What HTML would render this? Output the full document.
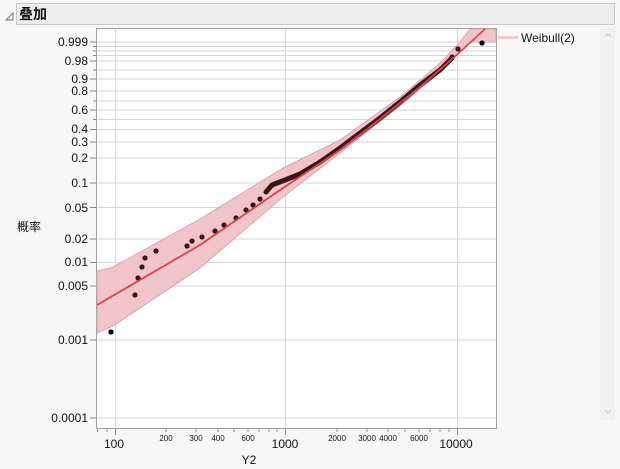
<!DOCTYPE html>
<html><head><meta charset="utf-8"><style>
html,body{margin:0;padding:0;background:#f7f7f7;width:620px;height:469px;overflow:hidden}
svg{display:block;font-family:"Liberation Sans","Noto Sans CJK SC",sans-serif}
</style></head><body>
<svg width="620" height="469" viewBox="0 0 620 469">
<rect x="0" y="0" width="620" height="469" fill="#f7f7f7"/>
<!-- header -->
<rect x="16.5" y="3.5" width="598" height="21" fill="#ececec" stroke="#c8c8c8"/>
<path d="M6 20 L13 13 L13 20 Z" fill="none" stroke="#777" stroke-width="1"/>
<text x="19" y="19" font-size="14" font-weight="bold" fill="#111" font-family="Noto Sans CJK SC,sans-serif">叠加</text>
<!-- scrollbar -->
<rect x="600" y="28" width="15" height="392" fill="#f0f0f0"/>
<path d="M605 37 L608 34 L611 37" fill="none" stroke="#ccc"/>
<path d="M605 410 L608 413 L611 410" fill="none" stroke="#ccc"/>
<!-- plot -->
<rect x="96.5" y="28.5" width="400" height="400" fill="#fff" stroke="#a0a0a0"/>
<g stroke="#d6d6d6" stroke-width="1">
<line x1="97" x2="496" y1="42" y2="42"/><line x1="97" x2="496" y1="46.5" y2="46.5"/><line x1="97" x2="496" y1="51" y2="51"/><line x1="97" x2="496" y1="55.5" y2="55.5"/><line x1="97" x2="496" y1="61" y2="61"/><line x1="97" x2="496" y1="70" y2="70"/><line x1="97" x2="496" y1="79" y2="79"/><line x1="97" x2="496" y1="91" y2="91"/><line x1="97" x2="496" y1="101" y2="101"/><line x1="97" x2="496" y1="110" y2="110"/><line x1="97" x2="496" y1="119.5" y2="119.5"/><line x1="97" x2="496" y1="129.5" y2="129.5"/><line x1="97" x2="496" y1="142" y2="142"/><line x1="97" x2="496" y1="158" y2="158"/><line x1="97" x2="496" y1="183" y2="183"/><line x1="97" x2="496" y1="207.5" y2="207.5"/><line x1="97" x2="496" y1="239" y2="239"/><line x1="97" x2="496" y1="262.5" y2="262.5"/><line x1="97" x2="496" y1="286" y2="286"/><line x1="97" x2="496" y1="340" y2="340"/><line x1="97" x2="496" y1="418" y2="418"/>
<line x1="115.5" x2="115.5" y1="29" y2="428"/><line x1="285.5" x2="285.5" y1="29" y2="428"/><line x1="457.5" x2="457.5" y1="29" y2="428"/>
</g>
<!-- y ticks -->
<g stroke="#888">
<line x1="90" x2="96" y1="42" y2="42"/><line x1="93" x2="96" y1="46.5" y2="46.5"/><line x1="93" x2="96" y1="51" y2="51"/><line x1="93" x2="96" y1="55.5" y2="55.5"/><line x1="90" x2="96" y1="61" y2="61"/><line x1="93" x2="96" y1="70" y2="70"/><line x1="90" x2="96" y1="79" y2="79"/><line x1="90" x2="96" y1="91" y2="91"/><line x1="93" x2="96" y1="101" y2="101"/><line x1="90" x2="96" y1="110" y2="110"/><line x1="93" x2="96" y1="119.5" y2="119.5"/><line x1="90" x2="96" y1="129.5" y2="129.5"/><line x1="90" x2="96" y1="142" y2="142"/><line x1="90" x2="96" y1="158" y2="158"/><line x1="90" x2="96" y1="183" y2="183"/><line x1="90" x2="96" y1="207.5" y2="207.5"/><line x1="90" x2="96" y1="239" y2="239"/><line x1="90" x2="96" y1="262.5" y2="262.5"/><line x1="90" x2="96" y1="286" y2="286"/><line x1="90" x2="96" y1="340" y2="340"/><line x1="90" x2="96" y1="418" y2="418"/>
</g>
<g font-size="12" fill="#111" text-anchor="end">
<text x="88" y="46">0.999</text><text x="88" y="65">0.98</text><text x="88" y="83">0.9</text><text x="88" y="95">0.8</text><text x="88" y="114">0.6</text><text x="88" y="133">0.4</text><text x="88" y="146">0.3</text><text x="88" y="162">0.2</text><text x="88" y="187">0.1</text><text x="88" y="212">0.05</text><text x="88" y="243">0.02</text><text x="88" y="266">0.01</text><text x="88" y="290">0.005</text><text x="88" y="344">0.001</text><text x="88" y="422">0.0001</text>
</g>
<text x="17" y="231" font-size="12" fill="#111" font-family="Noto Sans CJK SC,sans-serif">概率</text>
<!-- x ticks -->
<g stroke="#888">
<line x1="115.5" x2="115.5" y1="429" y2="435"/><line x1="285.5" x2="285.5" y1="429" y2="435"/><line x1="457.5" x2="457.5" y1="429" y2="435"/>
<line x1="97.5" x2="97.5" y1="429" y2="432"/><line x1="107" x2="107" y1="429" y2="432"/><line x1="166" x2="166" y1="429" y2="432"/><line x1="196" x2="196" y1="429" y2="432"/><line x1="218" x2="218" y1="429" y2="432"/><line x1="234" x2="234" y1="429" y2="432"/><line x1="248" x2="248" y1="429" y2="432"/><line x1="259" x2="259" y1="429" y2="432"/><line x1="269" x2="269" y1="429" y2="432"/><line x1="277" x2="277" y1="429" y2="432"/><line x1="337" x2="337" y1="429" y2="432"/><line x1="367" x2="367" y1="429" y2="432"/><line x1="388" x2="388" y1="429" y2="432"/><line x1="405" x2="405" y1="429" y2="432"/><line x1="419" x2="419" y1="429" y2="432"/><line x1="430" x2="430" y1="429" y2="432"/><line x1="440" x2="440" y1="429" y2="432"/><line x1="449" x2="449" y1="429" y2="432"/>
</g>
<g font-size="12" fill="#111" text-anchor="middle">
<text x="114" y="448">100</text><text x="285" y="448">1000</text><text x="456" y="448">10000</text>
<text x="249" y="464">Y2</text>
</g>
<g font-size="8" fill="#111" text-anchor="middle">
<text x="166" y="441">200</text><text x="196" y="441">300</text><text x="218" y="441">400</text><text x="248" y="441">600</text><text x="337" y="441">2000</text><text x="367" y="441">3000</text><text x="388" y="441">4000</text><text x="419" y="441">6000</text>
</g>
<!-- band -->
<path d="M97 271 L113 267 L200 219 L283 168 L340 140 L400 97 L440 63 L460 42 L470 29 L496 29 L496 42 L470 42 L460 52 L440 72 L400 106 L340 153 L283 197 L200 268 L113 326 L97 333 Z" fill="#f0c4c8" stroke="#c9a0a4" stroke-width="0.8"/>
<!-- dots -->
<g fill="#3a1515">
<circle cx="111" cy="332" r="2.6" fill="#000"/><circle cx="135" cy="295" r="2.6"/><circle cx="138" cy="278" r="2.6"/><circle cx="142" cy="267" r="2.6"/><circle cx="145" cy="258" r="2.6"/><circle cx="156" cy="251" r="2.6"/><circle cx="187" cy="246" r="2.6"/><circle cx="192" cy="241" r="2.6"/><circle cx="202" cy="237" r="2.6"/><circle cx="215" cy="231" r="2.6"/><circle cx="224" cy="225" r="2.6"/><circle cx="236" cy="218" r="2.6"/><circle cx="246" cy="210" r="2.6"/><circle cx="253" cy="205" r="2.6"/><circle cx="260" cy="199" r="2.6"/><circle cx="452" cy="57" r="2.6"/><circle cx="458" cy="49" r="2.6"/><circle cx="482" cy="43" r="2.6" fill="#000"/>
</g>
<path d="M266 192 L272 185 L285 180 L300 174 L320 162 L340 148 L360 133 L380 118 L400 102 L420 85 L440 70 L452 58" fill="none" stroke="#3a1515" stroke-width="5" stroke-linecap="round" stroke-linejoin="round"/>
<!-- fit line -->
<path d="M97 305 L200 245 L283 188 L340 150 L380 119 L420 87 L460 52 L485 29" fill="none" stroke="#d9434f" stroke-width="1.8"/>
<!-- legend -->
<line x1="498" x2="518" y1="37.5" y2="37.5" stroke="#f0b4b8" stroke-width="2"/>
<text x="521" y="42" font-size="12" fill="#111">Weibull(2)</text>
</svg>
</body></html>
